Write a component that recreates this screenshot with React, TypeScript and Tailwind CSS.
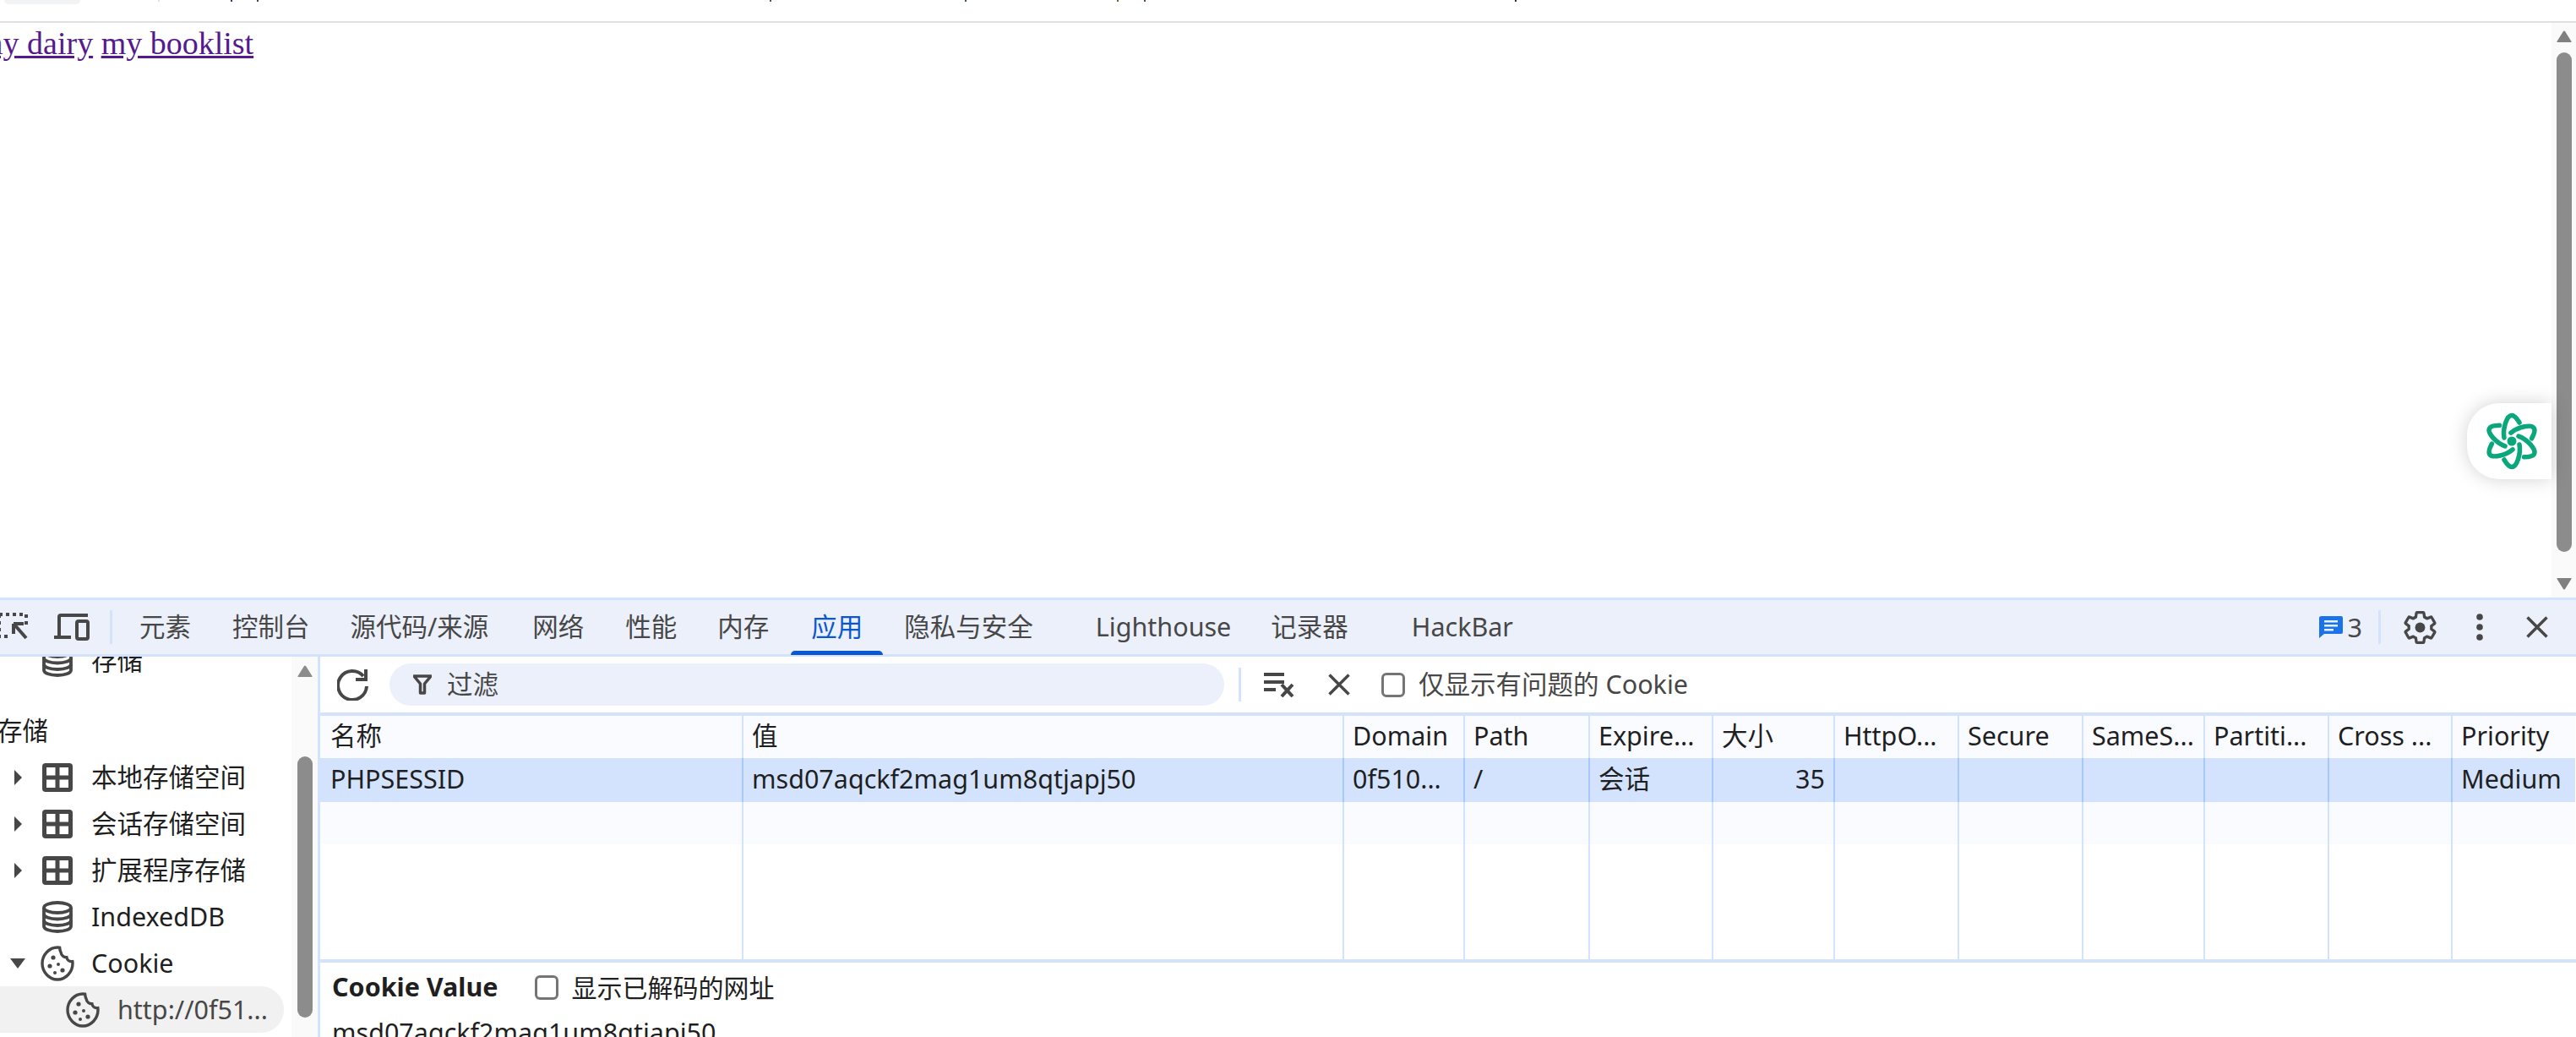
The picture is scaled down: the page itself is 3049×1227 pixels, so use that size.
import React from "react";

const tabs: [string, string][] = [
  ["元素", "ml-[32px]"],
  ["控制台", "ml-[49px]"],
  ["源代码/来源", "ml-[48px]"],
  ["网络", "ml-[52px]"],
  ["性能", "ml-[49px]"],
  ["内存", "ml-[48px]"],
  ["应用", "ml-[50px]"],
  ["隐私与安全", "ml-[49px]"],
  ["Lighthouse", "ml-[74px]"],
  ["记录器", "ml-[47px]"],
  ["HackBar", "ml-[75px]"],
];

const cols = "grid-cols-[499px_711px_143px_148px_146px_144px_147px_147px_144px_147px_146px_147px]";
const heads = ["名称", "值", "Domain", "Path", "Expire...", "大小", "HttpO...", "Secure", "SameS...", "Partiti...", "Cross ...", "Priority"];
const vals = ["PHPSESSID", "msd07aqckf2mag1um8qtjapj50", "0f510...", "/", "会话", "35", "", "", "", "", "", "Medium"];
const specks: [number, string][] = [
  [187, "#cfe3fb"],
  [273, "#3a3a6a"],
  [304, "#4a4a3a"],
  [911, "#6a4a5a"],
  [1142, "#3a5a6a"],
  [1322, "#6a6a2a"],
  [1354, "#6a3a6a"],
  [1793, "#333333"],
];

function TableIcon() {
  return (
    <svg width="36" height="34" viewBox="0 0 36 34" className="shrink-0">
      <rect x="0" y="0" width="36" height="34" rx="4" fill="#474747" />
      <rect x="5" y="5" width="10.500" height="9.500" fill="#fff" />
      <rect x="20.500" y="5" width="10.500" height="9.500" fill="#fff" />
      <rect x="5" y="19.500" width="10.500" height="9.500" fill="#fff" />
      <rect x="20.500" y="19.500" width="10.500" height="9.500" fill="#fff" />
    </svg>
  );
}
function DbIcon() {
  return (
    <svg width="36" height="38" viewBox="0 0 36 38" fill="none" stroke="#474747" strokeWidth="3.800" className="shrink-0">
      <ellipse cx="18" cy="8" rx="16" ry="6" />
      <path d="M2 8v22c0 3.500 7 6 16 6s16-2.500 16-6V8" />
      <path d="M2 15.500c0 3.500 7 6 16 6s16-2.500 16-6M2 23c0 3.500 7 6 16 6s16-2.500 16-6" />
    </svg>
  );
}
function CookieIcon() {
  return (
    <svg width="40" height="42" viewBox="0 0 40 42" fill="none" className="shrink-0">
      <path d="M20 2C10 2 2 11 2 21s8 19 18 19 18-9 18-19c0-1-.1-1.600-.2-2.400-3.300.5-6.300-1.600-6.900-4.800-3.300.2-6.300-2.300-6.700-5.600C23.500 6.900 22.700 3.700 22.600 2.200 21.800 2.100 20.900 2 20 2Z" stroke="#474747" strokeWidth="3.400" />
      <circle cx="15" cy="14" r="2.600" fill="#474747" />
      <circle cx="11" cy="24" r="2.600" fill="#474747" />
      <circle cx="21" cy="22" r="2" fill="#474747" />
      <circle cx="26" cy="29" r="2.600" fill="#474747" />
      <circle cx="17" cy="32" r="2" fill="#474747" />
    </svg>
  );
}
function Caret({ open }: { open?: boolean }) {
  return open ? (
    <svg width="20" height="14" viewBox="0 0 20 14" className="shrink-0"><path d="M1 1h18l-9 12z" fill="#474747" /></svg>
  ) : (
    <svg width="11" height="20" viewBox="0 0 11 20" className="shrink-0"><path d="M1 1l9 9-9 9z" fill="#474747" /></svg>
  );
}
function Check() {
  return <span className="block w-[28px] h-[29px] shrink-0 rounded-[6px] border-[3px] border-[#757575] bg-white" />;
}
function Logo() {
  return (
    <svg width="64" height="70" viewBox="-32 -35 64 70" fill="none" stroke="#0aa67c" strokeWidth="5.500" strokeLinecap="round">
      <circle cx="0" cy="0" r="5.500" fill="#0aa67c" stroke="none" />
      {[0, 60, 120, 180, 240, 300].map((a) => (
        <path key={a} d="M-9-4C-11-15-6-30.500 0-30.500C3-30.500 6-27 9-22" transform={`rotate(${a})`} />
      ))}
    </svg>
  );
}

export default function App() {
  return (
    <div className="w-[3049px] h-[1227px] overflow-hidden bg-white flex flex-col font-['Noto_Sans','Noto_Sans_CJK_SC',sans-serif] text-[30.500px] text-[#1f1f1f]">
      {/* page */}
      <div className="h-[707px] shrink-0 flex flex-col relative">
        <div className="h-[25px] shrink-0 border-b-[2px] border-[#e0e0e0] box-content">
          <div className="ml-[5px] w-[90px] h-[5px] rounded-b-[8px] bg-[#f1f3f4]" />
        </div>
        {specks.map(([x, c]) => (
          <span key={x} className="absolute top-0 w-[2px] h-[2px]" style={{ left: x, backgroundColor: c }} />
        ))}
        <div className="flex-1 flex min-h-0">
          <div className="flex-1 -ml-[26px] pt-[1px] font-['Liberation_Serif',serif] text-[38px] leading-[46px]">
            <a className="underline text-[#551a8b]">my dairy</a> <a className="underline text-[#551a8b]">my booklist</a>
          </div>
          <div className="w-[29px] shrink-0 bg-[#fafafa] flex flex-col items-center">
            <svg width="18" height="14" viewBox="0 0 18 14" className="mt-[9px]"><path d="M1 14h16q1 0 .5-1L10 1Q9 0 8 1L.5 13Q0 14 1 14Z" fill="#808080" /></svg>
            <div className="w-[18px] h-[591px] mt-[12px] rounded-[9px] bg-[#8c8c8c]" />
            <svg width="18" height="14" viewBox="0 0 18 14" className="mt-[31px]"><path d="M1 0h16q1 0 .5 1L10 13q-1 1-2 0L.5 1Q0 0 1 0Z" fill="#808080" /></svg>
          </div>
        </div>
        <div className="absolute left-[2920px] top-[477px] w-[100px] h-[90px] rounded-l-[38px] bg-white shadow-[0_0_22px_rgba(0,0,0,0.18)] flex items-center justify-center pl-[6px]">
          <Logo />
        </div>
      </div>
      {/* devtools toolbar */}
      <div className="h-[70px] shrink-0 border-y-[3px] border-[#d3e3fd] bg-[#ebf0fa] flex items-center text-[#474747] relative">
        <svg width="38" height="36" viewBox="0 0 38 36" className="ml-[-3px] shrink-0" fill="none" stroke="#474747">
          <path d="M2 3h32v16M2 3v26h14" strokeWidth="4" strokeDasharray="4 4" />
          <path d="M19 14v12M19 14h12M20 15l14 16" strokeWidth="4" />
        </svg>
        <svg width="42" height="32" viewBox="0 0 42 32" className="ml-[29px] shrink-0" fill="none">
          <path d="M6 30V4q0-2 2-2h32" stroke="#474747" strokeWidth="4" />
          <path d="M0 26h20v4H0z" fill="#474747" />
          <rect x="27" y="9" width="13" height="21" rx="2" stroke="#474747" strokeWidth="4" />
        </svg>
        <div className="ml-[24px] w-[3px] h-[40px] bg-[#d3e3fd] shrink-0" />
        {tabs.map(([t, m]) => (
          <span key={t} className={`${m} relative whitespace-nowrap ${t === "应用" ? "text-[#0b57d0]" : ""}`}>
            {t}
            {t === "应用" && <span className="absolute left-[-24px] right-[-24px] top-[51px] h-[5px] rounded-t-[5px] bg-[#0b57d0]" />}
          </span>
        ))}
        <div className="ml-auto flex items-center">
          <svg width="28" height="28" viewBox="0 0 28 28" className="shrink-0">
            <path d="M3 1h23q2 0 2 2v17q0 2-2 2H6l-6 5V3q0-2 3-2Z" fill="#1a73e8" />
            <path d="M6 6h16v2.500H6zM6 11h16v2.500H6zM6 16h11v2.500H6z" fill="#e8f0fe" />
          </svg>
          <span className="ml-[6px] leading-none">3</span>
          <div className="ml-[19px] w-[3px] h-[40px] bg-[#d3e3fd] shrink-0" />
          <svg width="39" height="39" viewBox="1.500 1.500 21 21" className="ml-[27px] shrink-0" fill="none" stroke="#474747" strokeWidth="1.800">
            <path d="M19.140 12.940c.04-.3.06-.61.06-.94 0-.32-.02-.64-.07-.94l2.030-1.580c.18-.14.23-.41.12-.61l-1.920-3.320c-.12-.22-.37-.29-.59-.22l-2.390.96c-.5-.38-1.030-.7-1.620-.94L14.400 2.810c-.04-.24-.24-.41-.48-.41h-3.840c-.24 0-.43.17-.47.41L9.250 5.350C8.660 5.590 8.120 5.920 7.630 6.290L5.240 5.330c-.22-.08-.47 0-.59.22L2.740 8.870C2.620 9.080 2.660 9.340 2.860 9.480l2.030 1.580C4.840 11.360 4.800 11.690 4.800 12s.02.64.07.94l-2.030 1.580c-.18.14-.23.41-.12.61l1.920 3.320c.12.22.37.29.59.22l2.390-.96c.5.38 1.030.7 1.620.94l.36 2.540c.05.24.24.41.48.41h3.840c.24 0 .44-.17.47-.41l.36-2.540c.59-.24 1.130-.56 1.620-.94l2.390.96c.22.08.47 0 .59-.22l1.920-3.320c.12-.22.07-.47-.12-.61L19.140 12.940Z" strokeLinejoin="round" />
            <circle cx="12" cy="12" r="3.200" fill="#474747" stroke="none" />
          </svg>
          <svg width="12" height="32" viewBox="0 0 12 32" className="ml-[45px] shrink-0" fill="#474747">
            <circle cx="6" cy="4" r="3.800" /><circle cx="6" cy="16" r="3.800" /><circle cx="6" cy="28" r="3.800" />
          </svg>
          <svg width="26" height="26" viewBox="0 0 26 26" className="ml-[49px] mr-[33px] shrink-0" stroke="#474747" strokeWidth="3.500">
            <path d="M1.500 1.500l23 23M24.500 1.500l-23 23" />
          </svg>
        </div>
      </div>
      {/* body */}
      <div className="flex-1 flex min-h-0">
        {/* sidebar */}
        <div className="w-[376px] shrink-0 flex overflow-hidden">
          <div className="flex-1 flex flex-col min-w-0 -mt-[23px]">
            <div className="h-[55px] shrink-0 flex items-center pl-[50px] gap-[22px]"><DbIcon /><span>存储</span></div>
            <div className="h-[55px] mt-[28px] shrink-0 flex items-center"><span className="-ml-[4px] whitespace-nowrap">存储</span></div>
            {["本地存储空间", "会话存储空间", "扩展程序存储"].map((t) => (
              <div key={t} className="h-[55px] shrink-0 flex items-center pl-[16px] whitespace-nowrap">
                <Caret />
                <span className="ml-[23px]"><TableIcon /></span>
                <span className="ml-[22px] -mr-[40px]">{t}</span>
              </div>
            ))}
            <div className="h-[55px] shrink-0 flex items-center pl-[50px] gap-[22px]"><DbIcon /><span>IndexedDB</span></div>
            <div className="h-[55px] shrink-0 flex items-center pl-[11px]">
              <Caret open />
              <span className="ml-[17px]"><CookieIcon /></span>
              <span className="ml-[20px]">Cookie</span>
            </div>
            <div className="h-[55px] shrink-0 w-[336px] rounded-r-[27px] bg-[#f1f1f1] flex items-center pl-[78px] gap-[21px] text-[#474747]">
              <CookieIcon /><span className="whitespace-nowrap">http://0f51...</span>
            </div>
          </div>
          <div className="w-[31px] shrink-0 bg-[#fafafa] flex flex-col items-center">
            <svg width="18" height="14" viewBox="0 0 18 14" className="mt-[10px]"><path d="M1 14h16q1 0 .5-1L10 1Q9 0 8 1L.5 13Q0 14 1 14Z" fill="#8c8c8c" /></svg>
            <div className="w-[18px] h-[309px] mt-[94px] rounded-[9px] bg-[#8c8c8c]" />
          </div>
        </div>
        {/* main */}
        <div className="flex-1 min-w-0 flex flex-col border-l-[3px] border-[#d3e3fd]">
          <div className="h-[66px] shrink-0 flex items-center">
            <svg width="38" height="38" viewBox="0 0 38 38" className="ml-[20px] shrink-0" fill="none" stroke="#474747" strokeWidth="4">
              <path d="M31 9a17 17 0 1 0 4 12" />
              <path d="M34 1v12H22" />
            </svg>
            <div className="ml-[24px] w-[988px] h-[50px] shrink-0 rounded-[25px] bg-[#ebf0fa] flex items-center pl-[28px] text-[#474747]">
              <svg width="22" height="24" viewBox="0 0 22 24" className="shrink-0" fill="none" stroke="#474747" strokeWidth="3.500">
                <path d="M1 2h20l-7.500 9v11h-5V11Z" strokeLinejoin="round" />
              </svg>
              <span className="ml-[18px]">过滤</span>
            </div>
            <div className="ml-[17px] w-[3px] h-[40px] bg-[#d3e3fd] shrink-0" />
            <svg width="36" height="30" viewBox="0 0 36 30" className="ml-[27px] shrink-0">
              <path d="M0 1h24v4H0zM0 10h24v4H0zM0 19h14v4H0z" fill="#474747" />
              <path d="M21 15l13 14M34 15L21 29" stroke="#474747" strokeWidth="4" />
            </svg>
            <svg width="26" height="26" viewBox="0 0 26 26" className="ml-[40px] shrink-0" stroke="#474747" strokeWidth="3.500">
              <path d="M1.500 1.500l23 23M24.500 1.500l-23 23" />
            </svg>
            <span className="ml-[37px]"><Check /></span>
            <span className="ml-[16px] text-[#474747] whitespace-nowrap">仅显示有问题的 Cookie</span>
          </div>
          <div className={`h-[296px] shrink-0 border-y-[4px] border-[#d3e3fd] grid ${cols} grid-rows-[50px_52px_50px_1fr]`}>
            {heads.map((h, i) => (
              <div key={h} className={`bg-[#f9fbff] flex items-center overflow-hidden whitespace-nowrap pb-[2px] ${i ? "border-l-[2px] border-[#d3e3fd] pl-[10px]" : "pl-[12px]"}`}>{h}</div>
            ))}
            {vals.map((v, i) => (
              <div key={i} className={`bg-[#d3e3fd] flex items-center overflow-hidden whitespace-nowrap pb-[2px] ${i ? "border-l-[2px] border-[#a8c7fa] pl-[10px]" : "pl-[12px]"} ${i === 5 ? "justify-end pr-[10px]" : ""}`}>{v}</div>
            ))}
            {vals.map((_, i) => (
              <div key={i} className={`bg-[#f9fbff] ${i ? "border-l-[2px] border-[#d3e3fd]" : ""}`} />
            ))}
            {vals.map((_, i) => (
              <div key={i} className={`bg-white ${i ? "border-l-[2px] border-[#d3e3fd]" : ""}`} />
            ))}
          </div>
          <div className="flex-1 min-h-0 pl-[14px] overflow-hidden">
            <div className="h-[58px] flex items-center">
              <span className="font-bold">Cookie Value</span>
              <span className="ml-[44px]"><Check /></span>
              <span className="ml-[15px] text-[30px]">显示已解码的网址</span>
            </div>
            <div className="leading-[40px] mt-[4px]">msd07aqckf2mag1um8qtjapj50</div>
          </div>
        </div>
      </div>
    </div>
  );
}
